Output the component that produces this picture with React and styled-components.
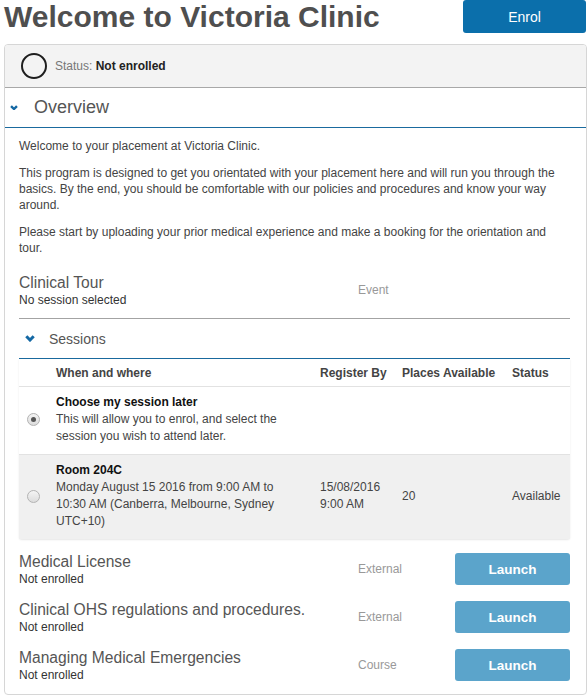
import React from "react";
import styled, { createGlobalStyle } from "styled-components";

const GlobalStyle = createGlobalStyle`
	body {
		margin: 0;
		background: #fff;
		font-family: "Liberation Sans", Arial, sans-serif;
		color: #444;
	}
`;

const Chevron = ({ size = 8 }) => (
	<svg width={size} height={size * 0.7} viewBox="0 0 10 7">
		<path d="M1.3 1.3 L5 5 L8.7 1.3" fill="none" stroke="#1468a4" strokeWidth="3" />
	</svg>
);

const sessions = [
	{
		id: "later",
		title: "Choose my session later",
		lines: "This will allow you to enrol, and select the session you wish to attend later.",
		checked: true,
	},
	{
		id: "204c",
		title: "Room 204C",
		lines: "Monday August 15 2016 from 9:00 AM to 10:30 AM (Canberra, Melbourne, Sydney UTC+10)",
		registerBy: ["15/08/2016", "9:00 AM"],
		places: "20",
		status: "Available",
	},
];

const modules = [
	{ name: "Medical License", type: "External" },
	{ name: "Clinical OHS regulations and procedures.", type: "External" },
	{ name: "Managing Medical Emergencies", type: "Course" },
];

const App = () => {
	return (
		<Page>
			<GlobalStyle />
			<Header>
				<Title>Welcome to Victoria Clinic</Title>
				<EnrolButton>Enrol</EnrolButton>
			</Header>

			<Panel>
				<StatusBar>
					<StatusRing />
					<StatusText>
						Status: <strong>Not enrolled</strong>
					</StatusText>
				</StatusBar>

				<OverviewToggle>
					<Chevron size={8} />
					<span>Overview</span>
				</OverviewToggle>

				<Content>
					<Paragraph>Welcome to your placement at Victoria Clinic.</Paragraph>
					<Paragraph>
						This program is designed to get you orientated with your placement here and will run
						you through the basics. By the end, you should be comfortable with our policies and
						procedures and know your way around.
					</Paragraph>
					<Paragraph>
						Please start by uploading your prior medical experience and make a booking for the
						orientation and tour.
					</Paragraph>

					<EventItem>
						<ItemInfo>
							<ItemName>Clinical Tour</ItemName>
							<ItemSub>No session selected</ItemSub>
						</ItemInfo>
						<ItemType>Event</ItemType>
					</EventItem>

					<SessionsToggle>
						<Chevron size={10} />
						<span>Sessions</span>
					</SessionsToggle>

					<SessionTable>
						<colgroup>
							<col style={{ width: 37 }} />
							<col style={{ width: 264 }} />
							<col style={{ width: 82 }} />
							<col style={{ width: 110 }} />
							<col style={{ width: 58 }} />
						</colgroup>
						<thead>
							<tr>
								<Th />
								<Th>When and where</Th>
								<Th>Register By</Th>
								<Th>Places Available</Th>
								<Th>Status</Th>
							</tr>
						</thead>
						<tbody>
							{sessions.map((s, i) => (
								<SessionRow key={s.id} $shaded={i % 2 === 1}>
									<RadioCell>
										<Radio $checked={s.checked} />
									</RadioCell>
									<WhereCell>
										<SessionTitle>{s.title}</SessionTitle>
										{s.lines}
									</WhereCell>
									<Td>
										{s.registerBy &&
											s.registerBy.map((l) => <div key={l}>{l}</div>)}
									</Td>
									<Td>{s.places}</Td>
									<Td>{s.status}</Td>
								</SessionRow>
							))}
						</tbody>
					</SessionTable>

					{modules.map((m) => (
						<Item key={m.name}>
							<ItemInfo>
								<ItemName>{m.name}</ItemName>
								<ItemSub>Not enrolled</ItemSub>
							</ItemInfo>
							<ItemType>{m.type}</ItemType>
							<LaunchButton>Launch</LaunchButton>
						</Item>
					))}
				</Content>
			</Panel>
		</Page>
	);
};

const Page = styled.div`
	padding: 0 1px 3px 4px;
`;

const Header = styled.div`
	display: flex;
	justify-content: space-between;
	align-items: flex-start;
	margin-bottom: 10px;
`;

const Title = styled.h1`
	margin: 0;
	font-size: 30px;
	line-height: 34px;
	font-weight: bold;
	color: #4f4f4f;
`;

const EnrolButton = styled.button`
	width: 123px;
	height: 33px;
	margin-right: 1px;
	border: none;
	border-radius: 3px;
	background: #0b6fab;
	color: #fff;
	font-family: inherit;
	font-size: 14px;
`;

const Panel = styled.div`
	border: 1px solid #d6d6d6;
	border-radius: 4px;
	overflow: hidden;
`;

const StatusBar = styled.div`
	display: flex;
	align-items: center;
	gap: 8px;
	height: 42px;
	padding-left: 16px;
	background: #f3f3f3;
	border-bottom: 1px solid #a8a8a8;
`;

const StatusRing = styled.span`
	width: 22px;
	height: 22px;
	border: 2px solid #1e1e1e;
	border-radius: 50%;
`;

const StatusText = styled.span`
	font-size: 12px;
	color: #777;

	strong {
		color: #222;
	}
`;

const OverviewToggle = styled.div`
	display: flex;
	align-items: center;
	gap: 16px;
	height: 39px;
	padding-left: 5px;
	border-bottom: 1px solid #1a6a9e;
	font-size: 18px;
	color: #555;
`;

const Content = styled.div`
	padding: 10px 16px 5px 14px;
`;

const Paragraph = styled.p`
	margin: 0 0 11px;
	font-size: 12px;
	line-height: 16px;
	color: #444;
`;

const Item = styled.div`
	display: grid;
	grid-template-columns: 1fr 97px 115px;
	align-items: center;
	padding: 7px 0;
`;

const EventItem = styled(Item)`
	padding: 7px 0 11px;
	margin-top: -1px;
	border-bottom: 1px solid #a3a3a3;
`;

const ItemInfo = styled.div`
	display: flex;
	flex-direction: column;
`;

const ItemName = styled.span`
	font-size: 15.6px;
	line-height: 20px;
	color: #555;
`;

const ItemSub = styled.span`
	font-size: 12px;
	line-height: 14px;
	color: #333;
`;

const ItemType = styled.span`
	font-size: 12px;
	color: #999;
`;

const LaunchButton = styled.button`
	height: 32px;
	border: none;
	border-radius: 3px;
	background: #5ba4cb;
	color: #fff;
	font-family: inherit;
	font-size: 13.5px;
	font-weight: bold;
`;

const SessionsToggle = styled.div`
	display: flex;
	align-items: center;
	gap: 14px;
	height: 39px;
	padding-left: 6px;
	border-bottom: 1px solid #1a6a9e;
	font-size: 14px;
	color: #555;
`;

const SessionTable = styled.table`
	width: 100%;
	table-layout: fixed;
	border-collapse: collapse;
	margin-bottom: 6px;
	box-shadow: 0 1px 2px rgba(0, 0, 0, 0.1);
	border-radius: 0 0 3px 3px;
	font-size: 12px;
	color: #444;
`;

const Th = styled.th`
	height: 27px;
	padding: 0;
	text-align: left;
	font-weight: bold;
	color: #444;
	border-bottom: 1px solid #e2e2e2;
`;

const SessionRow = styled.tr`
	background: ${(p) => (p.$shaded ? "#f0f0f0" : "#fff")};
	border-bottom: ${(p) => (p.$shaded ? "none" : "1px solid #e2e2e2")};
`;

const Td = styled.td`
	padding: 7px 0 9px;
	vertical-align: middle;
	line-height: 17px;
`;

const RadioCell = styled(Td)`
	padding-left: 8px;
`;

const WhereCell = styled(Td)`
	padding-right: 20px;
`;

const SessionTitle = styled.div`
	font-weight: bold;
	color: #111;
`;

const Radio = styled.span`
	display: block;
	position: relative;
	width: 11px;
	height: 11px;
	border: 1px solid #b3b3b3;
	border-radius: 50%;
	background: linear-gradient(#f4f4f4, #dcdcdc);

	&::after {
		content: "";
		display: ${(p) => (p.$checked ? "block" : "none")};
		position: absolute;
		top: 3px;
		left: 3px;
		width: 5px;
		height: 5px;
		border-radius: 50%;
		background: #555;
	}
`;

export default App;
